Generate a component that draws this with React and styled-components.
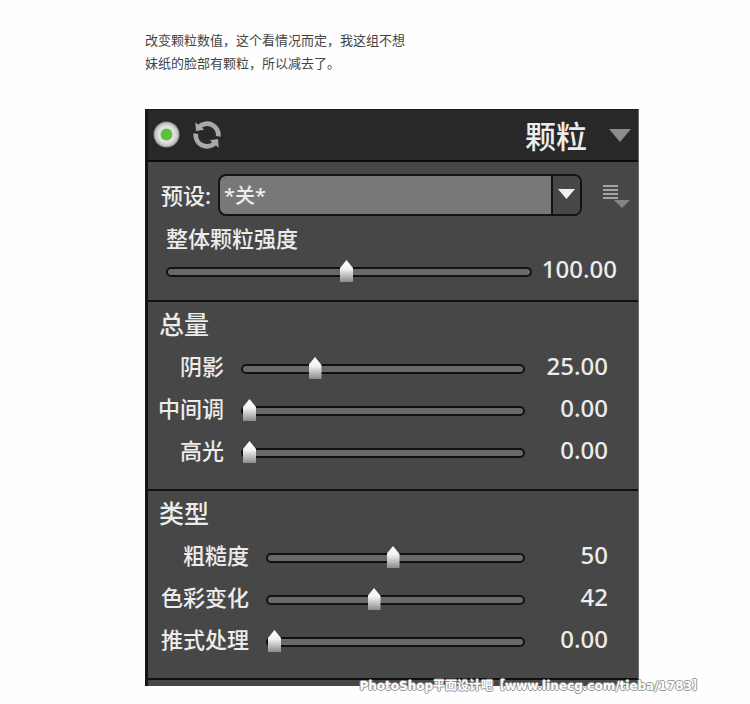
import React, { useState } from "react";
import styled, { createGlobalStyle } from "styled-components";

const GlobalStyle = createGlobalStyle`
  * {
    box-sizing: border-box;
  }
  body {
    margin: 0;
    background: #fefefe;
    font-family: "Noto Sans", "Noto Sans CJK SC", sans-serif;
  }
`;

const Page = styled.main`
  padding: 28px 111px 16px 145px;
`;

const Caption = styled.p`
  margin: 0 0 35px;
  color: #444;
  font: 13px/23px "Noto Sans CJK SC", sans-serif;
`;

const Figure = styled.div`
  position: relative;
`;

const Panel = styled.section`
  border-left: 3px solid #161616;
  border-top: 1px solid #1b1b1b;
  border-right: 1px solid #6a6a6a;
  background: #474747;
  color: #ececec;
`;

const Header = styled.header`
  display: flex;
  align-items: center;
  gap: 12px;
  height: 52px;
  padding: 0 7px 0 5px;
  border-bottom: 2px solid #0c0c0c;
  background: #282828;
`;

const IconButton = styled.button`
  display: flex;
  padding: 0;
  border: 0;
  background: none;
`;

const Title = styled.h1`
  margin: 0 10px 0 auto;
  font: 500 31px/44px "Noto Sans CJK SC", sans-serif;
`;

const Section = styled.section`
  padding: ${(p) => (p.$first ? "12px 0 13px" : "0 0 17px")};
  border-bottom: 2px solid #101010;
`;

const PresetRow = styled.div`
  display: flex;
  align-items: center;
  gap: 7px;
  padding: 0 8px 0 13px;
`;

const FieldLabel = styled.label`
  font: 500 22px/32px "Noto Sans", "Noto Sans CJK SC", sans-serif;
  white-space: nowrap;
`;

const SelectBox = styled.div`
  flex: 1;
  display: grid;
  grid-template-columns: 1fr 29px;
  height: 42px;
  margin-right: 12px;
  border: 2px solid #131313;
  border-radius: 8px;
  background: #787878;
  overflow: hidden;
`;

const Select = styled.select`
  grid-area: 1 / 1 / 2 / 3;
  appearance: none;
  padding: 2px 34px 0 4px;
  border: 0;
  background: none;
  color: #ececec;
  font: 500 20px/32px "Noto Sans", "Noto Sans CJK SC", sans-serif;
`;

const SelectArrow = styled.span`
  grid-area: 1 / 2 / 2 / 3;
  display: flex;
  justify-content: center;
  padding-top: 13px;
  border-left: 2px solid #131313;
  background: #474747;
  pointer-events: none;
`;

const OverallLabel = styled(FieldLabel)`
  display: block;
  margin: 7px 0 0 18px;
  line-height: 30px;
`;

const Heading = styled.h2`
  margin: 0;
  padding: 0 0 2px 11px;
  font: 500 25px/42px "Noto Sans CJK SC", sans-serif;
`;

const Row = styled.div`
  display: grid;
  grid-template-columns: ${(p) => p.$labelWidth}px 1fr 66px;
  column-gap: 17px;
  align-items: center;
  height: 42px;
  padding: 0 30px 0 10px;
`;

const RowLabel = styled(FieldLabel)`
  text-align: right;
  padding-bottom: 2px;
`;

const OverallRow = styled.div`
  display: grid;
  grid-template-columns: 1fr 85px;
  align-items: center;
  height: 34px;
  padding: 0 21px 0 18px;
`;

const Value = styled.output`
  padding-bottom: 2px;
  font: 500 24px/32px "Noto Sans", sans-serif;
  text-align: right;
`;

const Track = styled.div`
  display: flex;
  align-items: center;
  height: 10px;
  margin-top: 4px;
  padding: 0 5px 0 0;
  border: 2px solid #111;
  border-radius: 5px;
  background: #696969;
`;

const Range = styled.input`
  appearance: none;
  flex: 1;
  min-width: 0;
  height: 24px;
  margin: 0;
  padding-bottom: 2px;
  background: none;

  &::-webkit-slider-runnable-track {
    height: 22px;
  }

  &::-webkit-slider-thumb {
    appearance: none;
    width: 13px;
    height: 22px;
    background: linear-gradient(#fff 0, #f3f3f3 40%, #8b8b8b 100%);
    clip-path: polygon(50% 0, 100% 36%, 100% 100%, 0 100%, 0 36%);
  }
`;

const Footer = styled.div`
  height: 6px;
`;

const Watermark = styled.span`
  position: absolute;
  right: -65px;
  bottom: -10px;
  color: #fff;
  font: 700 12px/20px "DejaVu Sans", "Noto Sans CJK SC", sans-serif;
  white-space: nowrap;
  text-shadow: 1px 0 #999, -1px 0 #999, 0 1px #999, 0 -1px #999;
`;

function Triangle({ width, height, color }) {
  return (
    <svg width={width} height={height} viewBox="0 0 22 13" preserveAspectRatio="none" aria-hidden="true">
      <path d="M0 0h22L11 13z" fill={color} />
    </svg>
  );
}

function PowerIcon() {
  return (
    <svg width="28" height="28" viewBox="0 0 28 28" aria-hidden="true">
      <defs>
        <radialGradient id="ring">
          <stop offset="0.6" stopColor="#e2e2e2" />
          <stop offset="0.85" stopColor="#c4c4c4" />
          <stop offset="1" stopColor="#858585" />
        </radialGradient>
      </defs>
      <circle cx="13.500" cy="13.500" r="13" fill="url(#ring)" />
      <circle cx="13.500" cy="13.500" r="5.900" fill="#5fbf3f" />
    </svg>
  );
}

function RefreshIcon() {
  return (
    <svg width="28" height="28" viewBox="0 0 28 28" aria-hidden="true">
      <g fill="none" stroke="#a9a9a9" strokeWidth="4.8">
        <path d="M6.200 5.800A11.300 11.300 0 0 1 25.200 15.400" />
        <path d="M21.800 22.200A11.300 11.300 0 0 1 2.800 12.600" />
      </g>
      <g fill="#a9a9a9">
        <path d="M2.300 1.300L3 10l8.300-1.200z" />
        <path d="M25.700 26.700L25 18l-8.300 1.200z" />
      </g>
    </svg>
  );
}

function MenuIcon() {
  return (
    <svg width="29" height="26" viewBox="0 0 29 26" aria-hidden="true">
      <path d="M2 4h15M2 8h15M2 12h15M2 16h15" stroke="#a2a2a2" strokeWidth="2" />
      <path d="M13 18h16l-8 8z" fill="#858585" />
    </svg>
  );
}

function Slider({ id, value, max, onChange }) {
  return (
    <Track>
      <Range
        id={id}
        type="range"
        min="0"
        max={max}
        value={value}
        onChange={(e) => onChange(Number(e.target.value))}
      />
    </Track>
  );
}

function SliderRow({ id, label, initial, digits, labelWidth }) {
  const [value, setValue] = useState(initial);
  return (
    <Row $labelWidth={labelWidth}>
      <RowLabel htmlFor={id}>{label}</RowLabel>
      <Slider id={id} value={value} max={100} onChange={setValue} />
      <Value htmlFor={id}>{value.toFixed(digits)}</Value>
    </Row>
  );
}

const groups = [
  {
    title: "总量",
    labelWidth: 66,
    rows: [
      { id: "shadow", label: "阴影", initial: 25, digits: 2 },
      { id: "midtone", label: "中间调", initial: 0, digits: 2 },
      { id: "highlight", label: "高光", initial: 0, digits: 2 },
    ],
  },
  {
    title: "类型",
    labelWidth: 91,
    rows: [
      { id: "roughness", label: "粗糙度", initial: 50, digits: 0 },
      { id: "color", label: "色彩变化", initial: 42, digits: 0 },
      { id: "push", label: "推式处理", initial: 0, digits: 2 },
    ],
  },
];

export default function App() {
  const [overall, setOverall] = useState(100);
  return (
    <>
      <GlobalStyle />
      <Page>
        <Caption>
          改变颗粒数值，这个看情况而定，我这组不想
          <br />
          妹纸的脸部有颗粒，所以减去了。
        </Caption>
        <Figure>
          <Panel>
            <Header>
              <IconButton type="button" aria-label="启用">
                <PowerIcon />
              </IconButton>
              <IconButton type="button" aria-label="重置">
                <RefreshIcon />
              </IconButton>
              <Title>颗粒</Title>
              <IconButton type="button" aria-label="折叠">
                <Triangle width={22} height={13} color="#8c8c8c" />
              </IconButton>
            </Header>
            <Section $first>
              <PresetRow>
                <FieldLabel htmlFor="preset">预设:</FieldLabel>
                <SelectBox>
                  <Select id="preset">
                    <option>*关*</option>
                  </Select>
                  <SelectArrow>
                    <Triangle width={17} height={10} color="#f0f0f0" />
                  </SelectArrow>
                </SelectBox>
                <IconButton type="button" aria-label="菜单">
                  <MenuIcon />
                </IconButton>
              </PresetRow>
              <OverallLabel htmlFor="overall">整体颗粒强度</OverallLabel>
              <OverallRow>
                <Slider id="overall" value={overall} max={200} onChange={setOverall} />
                <Value htmlFor="overall">{overall.toFixed(2)}</Value>
              </OverallRow>
            </Section>
            {groups.map((group) => (
              <Section key={group.title}>
                <Heading>{group.title}</Heading>
                {group.rows.map((row) => (
                  <SliderRow key={row.id} {...row} labelWidth={group.labelWidth} />
                ))}
              </Section>
            ))}
            <Footer />
          </Panel>
          <Watermark>PhotoShop平面设计吧【www.linecg.com/tieba/1783】</Watermark>
        </Figure>
      </Page>
    </>
  );
}
